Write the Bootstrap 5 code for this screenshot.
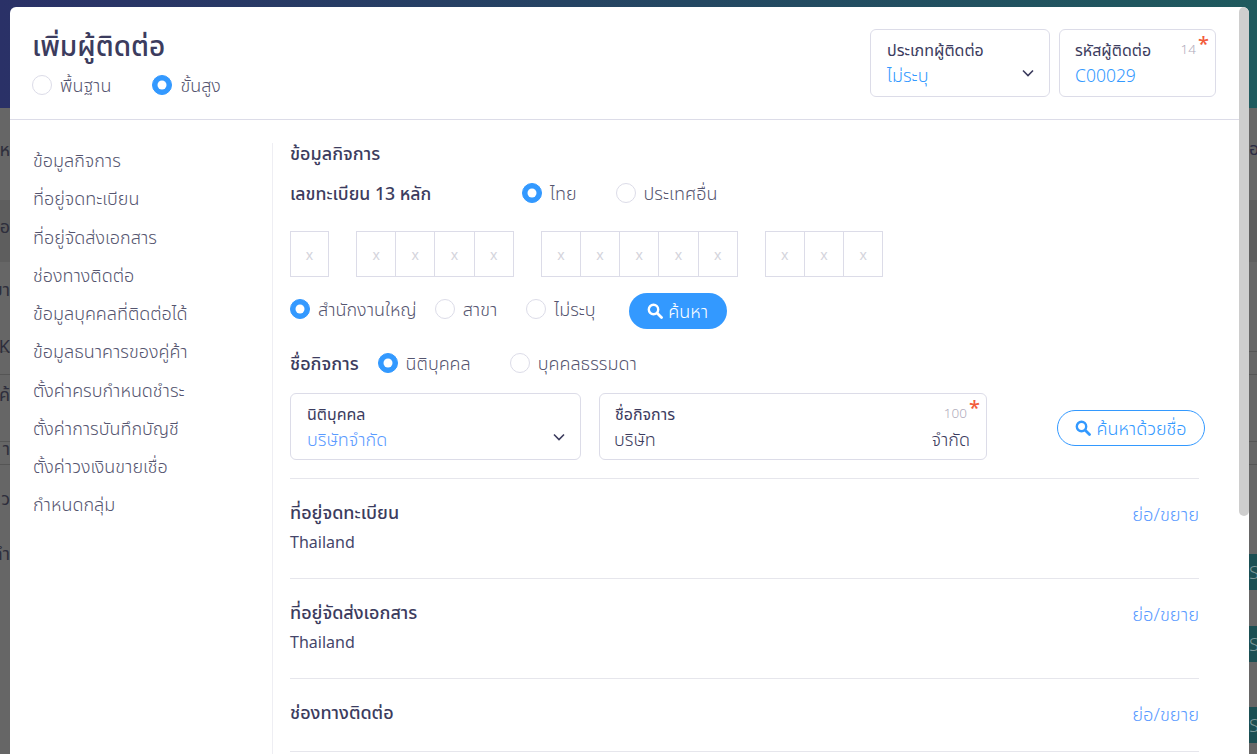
<!doctype html>
<html lang="th">
<head>
<meta charset="utf-8">
<title>เพิ่มผู้ติดต่อ</title>
<link rel="stylesheet" href="https://cdn.jsdelivr.net/npm/bootstrap@5.3.0/dist/css/bootstrap.min.css">
<style>
html,body{height:100%;overflow:hidden}
body{font-family:"Noto Sans","Noto Sans Thai",sans-serif;background:#666;color:#3c3c5e;font-size:16px;position:relative}
.page-band{height:108px;background:linear-gradient(90deg,#2a3167,#1f5a5e)}
.pg-a{height:92px}
.pg-b{height:62px;background:#5e5e5e}
.pg-c{height:90px;border-bottom:1px solid #555}
.pg-d{height:23px;border-bottom:1px solid #555}
.pg-e{height:67px;border-bottom:1px solid #555}
.edge-l{position:absolute;left:0;width:10px;overflow:hidden;white-space:nowrap;font-size:18px;color:#2e2e3c;line-height:20px;direction:rtl}
.edge-r{position:absolute;right:0;width:8px;background:#1b4f53;color:#7f9a9b;height:36px;line-height:36px;overflow:hidden;font-size:18px;font-weight:300}
.edge-t{position:absolute;right:0;width:8px;top:138px;color:#2c2c44;line-height:20px;font-size:18px;overflow:hidden}
.sheet{position:absolute;left:10px;right:8px;top:7px;bottom:0;background:#fff;border-radius:6px 6px 0 0;overflow:hidden}
.sheet-scroll{position:absolute;right:0;top:0;width:10px;height:509px;background:#cecece;border-radius:5px}
.sheet-head{height:113px;border-bottom:1px solid #dcdce8;padding:20px 33px 0 22px}
.sheet-title{font-size:28px;line-height:36px;margin:0;font-weight:500;color:#3c3c5e}
.head-fields{margin-top:2px;height:68px}
.radio-row{display:flex;align-items:center}
.radio-row .form-check-input{width:20px;height:20px;margin:0 8px 0 0;border:1px solid #dcdce8;flex:none}
.radio-row .form-check-input:checked{background-color:#39f;border-color:#39f}
.radio-txt{font-size:18px;line-height:24px;color:#55556f;font-weight:300}
.head-radios{display:flex;gap:41px;margin-top:10px}
.gap-r9{margin-right:1px}
.gap-r18{margin-right:18px}.gap-r29{margin-right:29px}.gap-r33{margin-right:33px}.gap-r39{margin-right:39px}
.field-box{border:1px solid #dcdce8;border-radius:6px;height:68px;padding:9px 16px 0;position:relative}
.field-box.is-67{height:67px}
.field-box.is-code{padding-left:15px}
.field-box.is-name{width:388px;margin-left:18px;padding-left:14px}
.field-box.is-name .field-lbl{padding-left:1px}
.field-lbl{font-size:16px;line-height:23px;font-weight:400;color:#3c3c5e}
.field-val{font-size:18px;line-height:27px;color:#39f;font-weight:300}
.field-val.is-code{font-size:17.5px}
.field-val.is-soft{color:#5b9bff}
.field-val.is-dark{color:#3c3c5e}
.field-cnt{position:absolute;right:19px;top:9px;font-size:13.5px;color:#b0acbc;line-height:20px;font-weight:300}
.field-req{position:absolute;right:6px;top:4px;font-size:20px;line-height:20px;color:#f25c3b;font-weight:500}
.field-caret{position:absolute;right:14px;top:36px}
.sheet-body{display:flex;padding-top:23px}
.side-col{width:263px;flex:none;border-right:1px solid #eeeef3;padding:0 0 0 23px;min-height:640px}
.side-col .nav-link{padding:0;color:#55556f;font-size:18px;font-weight:300;line-height:38.25px;position:relative;top:-2px}
.main-col{padding:0 40px 0 17px;flex:1;min-width:0}
.sec-h{font-size:18px;line-height:20px;font-weight:500;color:#3c3c5e;margin:0}
.sec-h.is-wide{width:232px;font-size:17.7px}
.sec-h.is-name{margin-right:19px}
.row-reg{margin-top:18px}
.digits{display:flex;gap:27px;margin-top:26px}
.digit-grp{display:flex}
.digit-cell{width:40.2px;height:46px;border:1px solid #dcdce8;margin-left:-1px;display:flex;align-items:center;justify-content:center;color:#d4d4dc;font-size:14px}
.digit-grp .digit-cell:first-child{margin-left:0}
.digit-grp.is-one .digit-cell{width:39px}
.pill-solid,.pill-line{border-radius:18px;height:36px;font-size:18px;font-weight:300;padding:0;display:flex;align-items:center;justify-content:center;gap:5px}
.pill-solid{background:#39f;color:#fff;border:0;width:98px;margin-top:2px;margin-bottom:-2px}
.pill-line{background:#fff;color:#39f;border:1px solid #39f;width:148px;margin-left:70px;margin-top:3px}
.sec-row{display:flex;justify-content:space-between;border-top:1px solid #e6e6ec;height:100px;padding-top:20px}
.sec-row.is-short{height:73px}
.sec-rows{margin-top:18px;border-bottom:1px solid #e6e6ec;width:909px}
.sec-ttl{font-size:18px;line-height:26px;font-weight:500;color:#3c3c5e}
.sec-sub{font-size:16px;line-height:24px;color:#46466a;margin-top:5px;font-weight:400}
.sec-lnk{color:#5b9bff;font-size:18.4px;line-height:28px;text-decoration:none;font-weight:300;margin-top:1px}
.row-tight{margin-top:14px}.row-name{margin-top:24px}.row-boxes{margin-top:18px}
</style>
</head>
<body>
<div class="page-band"></div>
<div class="pg-a"></div><div class="pg-b"></div><div class="pg-c"></div><div class="pg-d"></div><div class="pg-e"></div><div class="pg-d"></div>
<div class="edge-l" style="top:139px">ห</div>
<div class="edge-l" style="top:216px">อ</div>
<div class="edge-l" style="top:279px">ยา</div>
<div class="edge-l" style="top:336px">K</div>
<div class="edge-l" style="top:384px">ค้</div>
<div class="edge-l" style="top:438px">า</div>
<div class="edge-l" style="top:488px">ว</div>
<div class="edge-l" style="top:543px">ทำ</div>
<div class="edge-t">อ</div>
<div class="edge-r" style="top:554px">S</div>
<div class="edge-r" style="top:626px">S</div>
<div class="edge-r" style="top:707px">S</div>

<div class="sheet">
  <div class="sheet-scroll"></div>
  <div class="sheet-head d-flex justify-content-between">
    <div>
      <h1 class="sheet-title">เพิ่มผู้ติดต่อ</h1>
      <div class="head-radios">
        <label class="radio-row"><input class="form-check-input" type="radio" name="m"><span class="radio-txt">พื้นฐาน</span></label>
        <label class="radio-row"><input class="form-check-input" type="radio" name="m" checked><span class="radio-txt">ขั้นสูง</span></label>
      </div>
    </div>
    <div class="d-flex gap-2 head-fields">
      <div class="field-box gap-r9" style="width:180px">
        <div class="field-lbl">ประเภทผู้ติดต่อ</div>
        <div class="field-val">ไม่ระบุ</div>
        <svg class="field-caret" width="14" height="14" viewBox="0 0 14 14"><path d="M2 4.5 7 9.5 12 4.5" fill="none" stroke="#3c3c5e" stroke-width="1.6"/></svg>
      </div>
      <div class="field-box is-code" style="width:157px">
        <div class="field-lbl">รหัสผู้ติดต่อ</div>
        <div class="field-val is-code">C00029</div>
        <span class="field-cnt">14</span><span class="field-req">*</span>
      </div>
    </div>
  </div>
  <div class="sheet-body">
    <nav class="side-col nav flex-column d-block">
      <a class="nav-link" href="#">ข้อมูลกิจการ</a>
      <a class="nav-link" href="#">ที่อยู่จดทะเบียน</a>
      <a class="nav-link" href="#">ที่อยู่จัดส่งเอกสาร</a>
      <a class="nav-link" href="#">ช่องทางติดต่อ</a>
      <a class="nav-link" href="#">ข้อมูลบุคคลที่ติดต่อได้</a>
      <a class="nav-link" href="#">ข้อมูลธนาคารของคู่ค้า</a>
      <a class="nav-link" href="#">ตั้งค่าครบกำหนดชำระ</a>
      <a class="nav-link" href="#">ตั้งค่าการบันทึกบัญชี</a>
      <a class="nav-link" href="#">ตั้งค่าวงเงินขายเชื่อ</a>
      <a class="nav-link" href="#">กำหนดกลุ่ม</a>
    </nav>
    <div class="main-col">
      <h2 class="sec-h">ข้อมูลกิจการ</h2>
      <div class="d-flex align-items-center row-reg">
        <h3 class="sec-h is-wide">เลขทะเบียน 13 หลัก</h3>
        <label class="radio-row gap-r39"><input class="form-check-input" type="radio" name="c" checked><span class="radio-txt">ไทย</span></label>
        <label class="radio-row"><input class="form-check-input" type="radio" name="c"><span class="radio-txt">ประเทศอื่น</span></label>
      </div>
      <div class="digits">
        <div class="digit-grp is-one"><div class="digit-cell">x</div></div>
        <div class="digit-grp"><div class="digit-cell">x</div><div class="digit-cell">x</div><div class="digit-cell">x</div><div class="digit-cell">x</div></div>
        <div class="digit-grp"><div class="digit-cell">x</div><div class="digit-cell">x</div><div class="digit-cell">x</div><div class="digit-cell">x</div><div class="digit-cell">x</div></div>
        <div class="digit-grp"><div class="digit-cell">x</div><div class="digit-cell">x</div><div class="digit-cell">x</div></div>
      </div>
      <div class="d-flex align-items-center row-tight">
        <label class="radio-row gap-r18"><input class="form-check-input" type="radio" name="b" checked><span class="radio-txt">สำนักงานใหญ่</span></label>
        <label class="radio-row gap-r29"><input class="form-check-input" type="radio" name="b"><span class="radio-txt">สาขา</span></label>
        <label class="radio-row gap-r33"><input class="form-check-input" type="radio" name="b"><span class="radio-txt">ไม่ระบุ</span></label>
        <button class="btn pill-solid" type="button">
          <svg width="16" height="16" viewBox="0 0 16 16"><circle cx="6.5" cy="6.5" r="4.7" fill="none" stroke="currentColor" stroke-width="2.4"/><path d="M10 10l4.5 4.5" stroke="currentColor" stroke-width="2.8" stroke-linecap="round"/></svg>ค้นหา</button>
      </div>
      <div class="d-flex align-items-center row-name">
        <h3 class="sec-h is-name">ชื่อกิจการ</h3>
        <label class="radio-row gap-r39"><input class="form-check-input" type="radio" name="t" checked><span class="radio-txt">นิติบุคคล</span></label>
        <label class="radio-row"><input class="form-check-input" type="radio" name="t"><span class="radio-txt">บุคคลธรรมดา</span></label>
      </div>
      <div class="d-flex align-items-center row-boxes">
        <div class="field-box is-67" style="width:291px">
          <div class="field-lbl">นิติบุคคล</div>
          <div class="field-val is-soft">บริษัทจำกัด</div>
          <svg class="field-caret" width="14" height="14" viewBox="0 0 14 14"><path d="M2 4.5 7 9.5 12 4.5" fill="none" stroke="#3c3c5e" stroke-width="1.6"/></svg>
        </div>
        <div class="field-box is-67 is-name">
          <div class="field-lbl">ชื่อกิจการ</div>
          <div class="field-val is-dark d-flex justify-content-between"><span>บริษัท</span><span>จำกัด</span></div>
          <span class="field-cnt">100</span><span class="field-req">*</span>
        </div>
        <button class="btn pill-line" type="button">
          <svg width="16" height="16" viewBox="0 0 16 16"><circle cx="6.5" cy="6.5" r="4.7" fill="none" stroke="currentColor" stroke-width="2.4"/><path d="M10 10l4.5 4.5" stroke="currentColor" stroke-width="2.8" stroke-linecap="round"/></svg>ค้นหาด้วยชื่อ</button>
      </div>
      <div class="sec-rows">
        <div class="sec-row"><div><div class="sec-ttl">ที่อยู่จดทะเบียน</div><div class="sec-sub">Thailand</div></div><a class="sec-lnk" href="#">ย่อ/ขยาย</a></div>
        <div class="sec-row"><div><div class="sec-ttl">ที่อยู่จัดส่งเอกสาร</div><div class="sec-sub">Thailand</div></div><a class="sec-lnk" href="#">ย่อ/ขยาย</a></div>
        <div class="sec-row is-short"><div><div class="sec-ttl">ช่องทางติดต่อ</div></div><a class="sec-lnk" href="#">ย่อ/ขยาย</a></div>
      </div>
    </div>
  </div>
</div>
<script src="https://cdn.jsdelivr.net/npm/bootstrap@5.3.0/dist/js/bootstrap.bundle.min.js"></script>
</body>
</html>
